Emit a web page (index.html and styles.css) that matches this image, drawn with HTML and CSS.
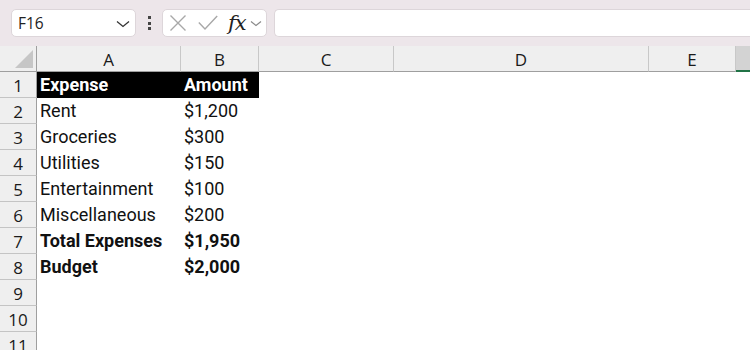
FILE: index.html
```html
<!DOCTYPE html>
<html>
<head>
<meta charset="utf-8">
<link rel="stylesheet" href="styles.css">
</head>
<body>
<div class="app">
  <div class="toolbar">
    <div class="namebox">
      <span class="name">F16</span>
      <svg class="chev" width="14" height="8" viewBox="0 0 14 8"><path d="M1 1.5 L7 6.5 L13 1.5" fill="none" stroke="#333" stroke-width="1.3"/></svg>
    </div>
    <div class="dots"><span></span><span></span><span></span></div>
    <div class="fxgroup">
      <svg class="ico" width="18" height="16" viewBox="0 0 18 16"><path d="M1.5 0.5 L16.5 15.5 M16.5 0.5 L1.5 15.5" stroke="#a8a8a8" stroke-width="1.4" fill="none"/></svg>
      <svg class="ico" width="20" height="16" viewBox="0 0 20 16"><path d="M0.8 7.5 L7 14 L19.2 1" stroke="#a8a8a8" stroke-width="1.4" fill="none"/></svg>
      <span class="fx">fx</span>
      <svg class="chev2" width="12" height="7" viewBox="0 0 12 7"><path d="M1 1.5 L6 5.5 L11 1.5" fill="none" stroke="#8a8a8a" stroke-width="1.2"/></svg>
    </div>
    <div class="formula"></div>
  </div>
  <div class="sheet">
    <div class="hd corner"><span class="tri"></span></div>
    <div class="hd col">A</div>
    <div class="hd col">B</div>
    <div class="hd col">C</div>
    <div class="hd col">D</div>
    <div class="hd col">E</div>
    <div class="hd col sel"></div>

    <div class="rh">1</div>
    <div class="c dark b">Expense</div><div class="c dark b">Amount</div><div class="c"></div><div class="c"></div><div class="c"></div><div class="c"></div>

    <div class="rh">2</div>
    <div class="c">Rent</div><div class="c">$1,200</div><div class="c"></div><div class="c"></div><div class="c"></div><div class="c"></div>

    <div class="rh">3</div>
    <div class="c">Groceries</div><div class="c">$300</div><div class="c"></div><div class="c"></div><div class="c"></div><div class="c"></div>

    <div class="rh">4</div>
    <div class="c">Utilities</div><div class="c">$150</div><div class="c"></div><div class="c"></div><div class="c"></div><div class="c"></div>

    <div class="rh">5</div>
    <div class="c">Entertainment</div><div class="c">$100</div><div class="c"></div><div class="c"></div><div class="c"></div><div class="c"></div>

    <div class="rh">6</div>
    <div class="c">Miscellaneous</div><div class="c">$200</div><div class="c"></div><div class="c"></div><div class="c"></div><div class="c"></div>

    <div class="rh">7</div>
    <div class="c b">Total Expenses</div><div class="c b">$1,950</div><div class="c"></div><div class="c"></div><div class="c"></div><div class="c"></div>

    <div class="rh">8</div>
    <div class="c b">Budget</div><div class="c b">$2,000</div><div class="c"></div><div class="c"></div><div class="c"></div><div class="c"></div>

    <div class="rh">9</div>
    <div class="c"></div><div class="c"></div><div class="c"></div><div class="c"></div><div class="c"></div><div class="c"></div>

    <div class="rh">10</div>
    <div class="c"></div><div class="c"></div><div class="c"></div><div class="c"></div><div class="c"></div><div class="c"></div>

    <div class="rh">11</div>
    <div class="c"></div><div class="c"></div><div class="c"></div><div class="c"></div><div class="c"></div><div class="c"></div>
  </div>
</div>
</body>
</html>
```
FILE: styles.css
```css
html, body {
  margin: 0;
  padding: 0;
  background: #ffffff;
}
.app {
  width: 750px;
  height: 350px;
  overflow: hidden;
}
.toolbar {
  height: 46px;
  box-sizing: border-box;
  background: #ede6ea;
  display: flex;
  align-items: flex-start;
  padding: 9px 0 0 11px;
}
.namebox {
  width: 125px;
  height: 28px;
  box-sizing: border-box;
  background: #fff;
  border: 1px solid #ddd6da;
  border-radius: 5px;
  display: flex;
  align-items: center;
  justify-content: space-between;
  padding: 0 5px 0 6px;
}
.name {
  font-family: "Open Sans", "Noto Sans", sans-serif;
  font-size: 15.5px;
  color: #222;
}
.chev {
  margin-top: 2px;
}
.dots {
  width: 3px;
  margin: 7px 11px 0 12px;
  display: flex;
  flex-direction: column;
  gap: 2.5px;
}
.dots span {
  width: 3px;
  height: 3px;
  background: #444;
}
.fxgroup {
  width: 105px;
  height: 28px;
  box-sizing: border-box;
  background: #fff;
  border: 1px solid #ddd6da;
  border-radius: 5px;
  display: flex;
  align-items: center;
  padding: 0 0 0 6px;
}
.fxgroup .ico:first-child {
  margin-right: 11px;
}
.fx {
  font-family: "DejaVu Serif", "Liberation Serif", serif;
  font-style: italic;
  font-size: 21px;
  color: #222;
  margin: 0 4px 0 10px;
  line-height: 1;
  letter-spacing: -1px;
}
.chev2 {
  margin-top: 1px;
}
.formula {
  flex: 1;
  height: 28px;
  box-sizing: border-box;
  margin-left: 7px;
  background: #fff;
  border: 1px solid #ddd6da;
  border-right: none;
  border-radius: 5px 0 0 5px;
}
.sheet {
  display: grid;
  grid-template-columns: 37px 144px 78px 135px 255px 87px 20px;
  grid-template-rows: 26px;
  grid-auto-rows: 26px;
}
.hd {
  background: #efefef;
  border-bottom: 1px solid #9f9f9f;
  box-sizing: border-box;
}
.col {
  border-right: 1px solid #c8c8c8;
  display: flex;
  align-items: center;
  justify-content: center;
  font-family: "Open Sans", "Noto Sans", sans-serif;
  font-size: 17px;
  color: #1a1a1a;
  padding-top: 1px;
}
.col.sel {
  background: #d3d3d3;
  border-bottom: 2px solid #217346;
  border-right: none;
}
.corner {
  border-right: 1px solid #9f9f9f;
  position: relative;
}
.tri {
  position: absolute;
  right: 3px;
  bottom: 3px;
  width: 0;
  height: 0;
  border-left: 18px solid transparent;
  border-bottom: 18px solid #c6c6c6;
}
.rh {
  background: #efefef;
  border-right: 1px solid #9f9f9f;
  border-bottom: 1px solid #c4c4c4;
  box-sizing: border-box;
  display: flex;
  align-items: center;
  justify-content: center;
  font-family: "Open Sans", "Noto Sans", sans-serif;
  font-size: 17px;
  color: #1a1a1a;
  padding-top: 1px;
}
.c {
  font-family: Roboto, "Noto Sans", sans-serif;
  font-size: 18px;
  color: #111;
  display: flex;
  align-items: center;
  padding-left: 3px;
  white-space: nowrap;
  overflow: visible;
  padding-bottom: 1px;
}
.c.b {
  font-weight: 700;
}
.c.dark {
  background: #000;
  color: #fff;
}
```
